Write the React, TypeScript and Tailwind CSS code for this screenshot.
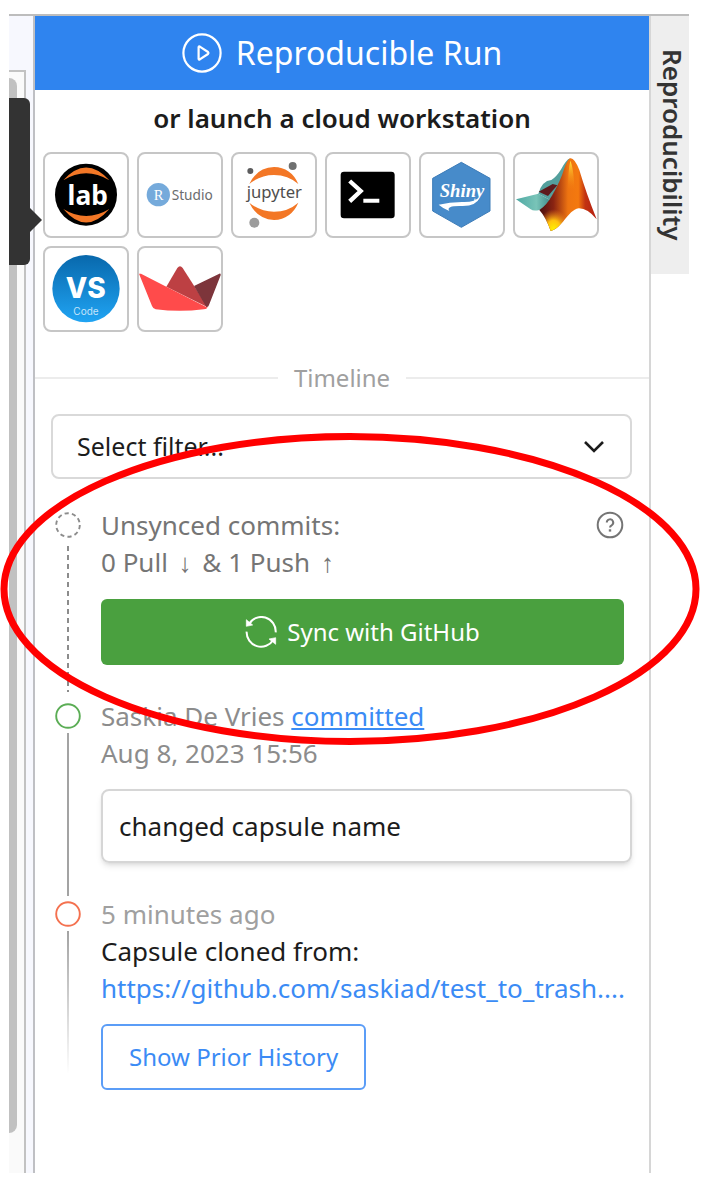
import type { ReactNode } from "react";

function Tile({ label, box, children }: { label: string; box: string; children: ReactNode }) {
  return (
    <button
      type="button"
      aria-label={label}
      className="size-[86px] shrink-0 overflow-hidden rounded-lg border-2 border-[#c6c6c6] bg-white"
    >
      <svg viewBox={box} className="block size-full" aria-hidden="true">
        {children}
      </svg>
    </button>
  );
}

function Workstations() {
  return (
    <div className="flex flex-wrap gap-2 px-2">
      <Tile label="JupyterLab" box="135 42 246 246">
        <circle cx="258" cy="164" r="93" fill="#000" />
        <path d="M190 121 Q258 44 328 121 Q258 79 190 121Z" fill="#f37726" />
        <path d="M190 207 Q258 288 328 207 Q258 249 190 207Z" fill="#f37726" />
        <text x="263" y="194" textAnchor="middle" fontFamily="Noto Sans, sans-serif" fontWeight="700" fontSize="79" fill="#fff">lab</text>
      </Tile>
      <Tile label="RStudio" box="418 42 246 246">
        <circle cx="476" cy="164" r="35" fill="#75aadb" />
        <text x="477" y="179" textAnchor="middle" fontFamily="Liberation Serif, serif" fontSize="44" fill="#fff">R</text>
        <text x="516" y="180" fontFamily="Noto Sans, sans-serif" fontSize="41" fill="#6b6c6e">Studio</text>
      </Tile>
      <Tile label="Jupyter" box="701 42 246 246">
        <path d="M750 132 Q773 82 824 81 Q875 82 897 132 Q866 105 824 105 Q782 105 750 132Z" fill="#f37726" />
        <path d="M750 188 Q773 238 824 240 Q875 238 897 188 Q866 215 824 215 Q782 215 750 188Z" fill="#f37726" />
        <circle cx="753" cy="93" r="9" fill="#5c5c5d" />
        <circle cx="880" cy="78" r="12" fill="#6f7070" />
        <circle cx="765" cy="248" r="15" fill="#9c9c9c" />
        <text x="825" y="174" textAnchor="middle" fontFamily="Noto Sans, sans-serif" fontSize="50" fill="#4e4e4e">jupyter</text>
      </Tile>
      <Tile label="Terminal" box="24 42 246 246">
        <rect x="65" y="95" width="162" height="140" rx="10" fill="#000" />
        <path d="M92 123 L125 153 L92 184" fill="none" stroke="#fff" strokeWidth="13" />
        <path d="M133 182 H181" stroke="#fff" strokeWidth="12" />
      </Tile>
      <Tile label="Shiny" box="307 42 246 246">
        <path d="M428 67 L514 115 V213 L428 262 L342 213 V115Z" fill="#478bca" stroke="#3d7cb8" strokeWidth="3" />
        <text x="430" y="170" textAnchor="middle" fontFamily="Liberation Serif, serif" fontStyle="italic" fontWeight="700" fontSize="56" fill="#fff">Shiny</text>
        <path d="M360 194 Q392 186 430 186 Q468 188 484 170 Q474 198 432 198 Q404 197 396 201 Q386 204 392 213 Q374 206 360 194Z" fill="#fff" />
      </Tile>
      <Tile label="MATLAB" box="585 42 246 246">
        <defs>
          <linearGradient id="mat-body" x1="0" x2="1" y1="0" y2="0">
            <stop offset="0" stopColor="#4a0f10" />
            <stop offset="0.25" stopColor="#8a2412" />
            <stop offset="0.5" stopColor="#ee7411" />
            <stop offset="0.68" stopColor="#f4790f" />
            <stop offset="0.8" stopColor="#c23312" />
            <stop offset="1" stopColor="#b51f10" />
          </linearGradient>
          <linearGradient id="mat-wing" x1="0" x2="1" y1="0" y2="0">
            <stop offset="0" stopColor="#4fa9a4" />
            <stop offset="0.6" stopColor="#79c4b8" />
            <stop offset="1" stopColor="#3f8e8c" />
          </linearGradient>
          <radialGradient id="mat-glow" cx="0.25" cy="0.98" r="0.28">
            <stop offset="0" stopColor="#fff200" />
            <stop offset="0.45" stopColor="#ffc20e" />
            <stop offset="1" stopColor="#f58220" stopOpacity="0" />
          </radialGradient>
          <linearGradient id="mat-peak" x1="0" x2="0" y1="0" y2="1">
            <stop offset="0" stopColor="#ffe23a" />
            <stop offset="1" stopColor="#f5820f" stopOpacity="0" />
          </linearGradient>
        </defs>
        <path d="M588 178 L655 161 L690 180 Q670 205 658 210 Q640 214 632 208Z" fill="url(#mat-wing)" />
        <path d="M655 161 Q666 122 694 120 Q708 112 722 90 Q738 60 750 55 L730 110 L690 180Z" fill="#54a09d" />
        <path d="M656 155 L698 132 L712 136 L684 168Z" fill="#5e1a1c" />
        <path d="M750 55 Q763 52 778 90 Q798 158 830 238 Q802 204 776 205 C742 212 728 264 692 273 Q678 232 658 210 Q680 196 697 165 Q722 122 732 88 Q740 62 750 55Z" fill="url(#mat-body)" />
        <path d="M750 55 Q763 52 778 90 Q798 158 830 238 Q802 204 776 205 C742 212 728 264 692 273 Q678 232 658 210 Q680 196 697 165 Q722 122 732 88 Q740 62 750 55Z" fill="url(#mat-glow)" />
        <path d="M751 62 Q760 80 764 150 L744 150 Q744 90 751 62Z" fill="url(#mat-peak)" />
      </Tile>
      <Tile label="VS Code" box="135 325 246 246">
        <defs>
          <linearGradient id="vs" x1="0" x2="0" y1="0" y2="1">
            <stop offset="0" stopColor="#0868ac" />
            <stop offset="1" stopColor="#20a4f3" />
          </linearGradient>
        </defs>
        <circle cx="258" cy="447" r="101" fill="url(#vs)" />
        <text x="257" y="475" textAnchor="middle" fontFamily="Inter, sans-serif" fontWeight="800" fontSize="84" fill="#fff">VS</text>
        <text x="258" y="527" textAnchor="middle" fontFamily="Inter, sans-serif" fontSize="30" fill="#c4e4fa">Code</text>
      </Tile>
      <Tile label="Streamlit" box="418 325 246 246">
        <path d="M500 441 L533 385 Q541 375 549 385 L583 438 L624 503Z" fill="#bd4043" />
        <path d="M583 439 L659 402 Q664 401 663 407 L628 496 Q626 503 620 502Z" fill="#7d353b" />
        <path d="M418 402 L424 402 L500 441 L624 504 Q618 509 612 509 Q540 518 468 509 Q460 507 457 499Z" fill="#ff4b4b" />
      </Tile>
    </div>
  );
}

function Marker({ color, dashes }: { color: string; dashes?: string }) {
  return (
    <svg viewBox="0 0 26 26" className="size-[26px] shrink-0" fill="none" aria-hidden="true">
      <circle cx="13" cy="13" r="11.8" stroke={color} strokeWidth="1.9" strokeDasharray={dashes} />
    </svg>
  );
}

function Entry({ marker, line, children }: { marker: ReactNode; line: ReactNode; children: ReactNode }) {
  return (
    <li className="flex gap-5">
      <div className="flex w-[26px] shrink-0 flex-col items-center gap-1 pt-[5px]">
        {marker}
        {line}
      </div>
      <div className="min-w-0 flex-1">{children}</div>
    </li>
  );
}

function Timeline() {
  return (
    <ol className="flex flex-col pt-7 pr-[17px] pl-5 text-[26px] leading-[37px]">
      <Entry
        marker={<Marker color="#8c8c8c" dashes="4.2 3.2" />}
        line={
          <span className="mt-1 mb-1.5 w-0.5 flex-1 bg-[repeating-linear-gradient(#8c8c8c_0_5px,transparent_5px_9px)]" />
        }
      >
        <div className="pr-2 pb-[33px] text-[#757575]">
          <div className="flex items-start justify-between">
            <p>Unsynced commits:</p>
            <button type="button" aria-label="Help" className="mt-1">
              <svg viewBox="0 0 28 28" className="block size-7" fill="none" stroke="#757575" strokeWidth="2" aria-hidden="true">
                <circle cx="14" cy="14" r="12.3" />
                <path d="M10.8 11.6a3.2 3.2 0 1 1 4.8 2.7c-1.1.6-1.6 1.1-1.6 2.3" />
                <path d="M14 18.3v2.3" strokeWidth="2.4" />
              </svg>
            </button>
          </div>
          <p>
            0 Pull <span className="px-1 font-['Liberation_Sans',sans-serif]">↓</span> &amp; 1 Push{" "}
            <span className="px-1 font-['Liberation_Sans',sans-serif]">↑</span>
          </p>
          <button
            type="button"
            className="mt-[17px] flex h-[66px] w-full items-center justify-center gap-2.5 rounded-md bg-[#4aa03f] text-2xl text-white"
          >
            <svg viewBox="735 105 96 96" className="size-8" fill="none" stroke="#fff" strokeWidth="6" aria-hidden="true">
              <path d="M746 131 A43 43 0 0 1 827 154" />
              <path d="M740 152 A43 43 0 0 0 820 176" />
              <path d="M739 116 V136 L758 132Z" fill="#fff" strokeWidth="2" />
              <path d="M827 190 V170 L807 174Z" fill="#fff" strokeWidth="2" />
            </svg>
            Sync with GitHub
          </button>
        </div>
      </Entry>
      <Entry marker={<Marker color="#5bad55" />} line={<span className="w-0.5 flex-1 bg-[#a3a3a3]" />}>
        <div className="pb-[33px] text-[#8c8c8c]">
          <p>
            Saskia De Vries{" "}
            <a href="#commit" className="text-[#3b8bf5] underline decoration-2 underline-offset-2">
              committed
            </a>
          </p>
          <p>Aug 8, 2023 15:56</p>
          <div className="mt-[17px] rounded-lg border-2 border-[#d6d6d6] px-4 py-[15px] leading-10 text-[#1c1c1c] shadow-md">
            changed capsule name
          </div>
        </div>
      </Entry>
      <Entry
        marker={<Marker color="#f4714f" />}
        line={<span className="mb-4 w-0.5 flex-1 bg-linear-to-b from-[#a3a3a3] to-transparent" />}
      >
        <p className="text-[#a0a0a0]">5 minutes ago</p>
        <p className="text-[#1c1c1c]">Capsule cloned from:</p>
        <a href="#origin" className="block whitespace-nowrap text-[#3b8bf5]">
          https://github.com/saskiad/test_to_trash....
        </a>
        <button
          type="button"
          className="mt-[17px] h-[66px] rounded-md border-2 border-[#5b9df7] px-[26px] text-2xl text-[#3b8bf5]"
        >
          Show Prior History
        </button>
      </Entry>
    </ol>
  );
}

export default function App() {
  return (
    <div className="relative min-h-screen bg-white pt-3.5 pr-3 pl-[9px] pb-1 font-['Noto_Sans',sans-serif]">
      <div className="flex min-h-[1159px] border-t-2 border-[#bdbdbd]">
        <div className="relative flex w-6 shrink-0 flex-col bg-[#f7f8fe] pt-[54px] pr-[7px]">
          <div className="flex flex-1 flex-col border-t-2 border-r-2 border-[#c2c2c2] bg-[#fafafa] pt-1.5 pr-1.5 pb-10">
            <div className="w-2 flex-1 rounded-r-lg bg-[#c1c1c1]" />
          </div>
          <div className="absolute top-[82px] left-0 z-10 h-[167px] w-[21px] rounded-r-md bg-[#333]">
            <svg viewBox="0 0 12 24" className="absolute top-[110px] left-full h-6 w-3" aria-hidden="true">
              <path d="M0 0 L12 12 L0 24Z" fill="#333" />
            </svg>
          </div>
        </div>

        <main className="min-w-0 flex-1 border-x-2 border-l-[#bfc0c4] border-r-[#d6d6d6]">
          <button
            type="button"
            className="flex h-[74px] w-full items-center justify-center gap-3.5 bg-[#2f84ef] text-[32px] text-white"
          >
            <svg viewBox="0 0 40 40" className="size-10" fill="none" stroke="#fff" strokeWidth="2.2" strokeLinejoin="round" aria-hidden="true">
              <circle cx="20" cy="20" r="18.6" />
              <path d="M16.6 14.2 Q16.6 13 17.8 13.6 L26 19 Q27 20 26 21 L17.8 26.4 Q16.6 27 16.6 25.8Z" />
            </svg>
            Reproducible Run
          </button>
          <h2 className="pt-2.5 pb-[15px] text-center text-[26px] leading-[37px] font-semibold text-[#1c1c1c]">
            or launch a cloud workstation
          </h2>
          <Workstations />
          <div className="flex items-center gap-4 pt-[27px] text-2xl leading-[37px] text-[#a0a0a0]">
            <span className="h-0.5 flex-1 bg-[#ececec]" />
            Timeline
            <span className="h-0.5 flex-1 bg-[#ececec]" />
          </div>
          <div className="mt-[18px] mr-[17px] ml-4 grid items-center">
            <select
              aria-label="Select filter"
              className="col-start-1 row-start-1 h-[65px] w-full appearance-none rounded-lg border-2 border-[#d9d9d9] bg-white px-6 text-[25px] text-[#1c1c1c]"
            >
              <option>Select filter...</option>
            </select>
            <svg
              viewBox="0 0 20 12"
              className="pointer-events-none col-start-1 row-start-1 mr-7 h-3 w-5 justify-self-end"
              fill="none"
              stroke="#1c1c1c"
              strokeWidth="2.6"
              aria-hidden="true"
            >
              <path d="M1 1 L10 10 L19 1" />
            </svg>
          </div>
          <Timeline />
        </main>

        <aside className="w-[38px] shrink-0">
          <button
            type="button"
            className="flex h-[258px] w-full items-center bg-[#eee] pt-[33px] pl-1 text-[26px] font-semibold text-[#333] [writing-mode:vertical-rl]"
          >
            Reproducibility
          </button>
        </aside>
      </div>

      <svg
        viewBox="0 0 701 314"
        preserveAspectRatio="none"
        className="pointer-events-none absolute inset-x-0 top-[432px] z-20 h-[314px] w-full"
        aria-hidden="true"
      >
        <ellipse cx="350" cy="157" rx="346" ry="152.5" fill="none" stroke="#f00" strokeWidth="7" />
      </svg>
    </div>
  );
}
